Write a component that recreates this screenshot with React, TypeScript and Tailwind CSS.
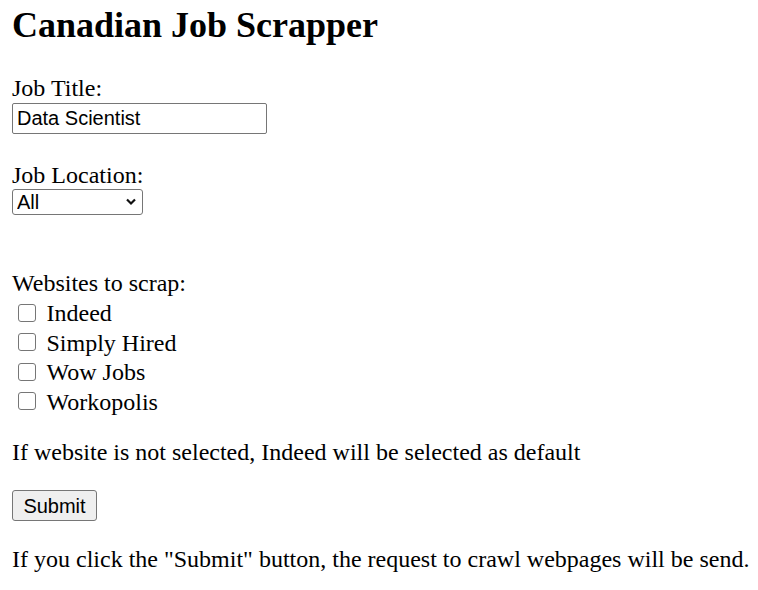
import { useState } from "react";

const sites = ["Indeed", "Simply Hired", "Wow Jobs", "Workopolis"];

export default function App() {
  const [title, setTitle] = useState("Data Scientist");
  const [location, setLocation] = useState("All");
  const [checked, setChecked] = useState<Record<string, boolean>>({});

  return (
    <div className="min-h-[590px] bg-white pl-3 text-black font-['Liberation_Serif','Times_New_Roman',serif]">
      <h1 className="m-0 mt-[2px] text-[36px] font-bold leading-[46px]">Canadian Job Scrapper</h1>

      {/* Job title */}
      <div className="mt-[27.4px] text-[24px] leading-[27px]">Job Title:</div>
      <input
        type="text"
        value={title}
        onChange={(e) => setTitle(e.target.value)}
        className="mt-[1px] block h-[31px] w-[255px] rounded-[2px] border border-[#767676] bg-white px-[4px] font-['Liberation_Sans',Arial,sans-serif] text-[20px] text-black outline-none"
      />

      {/* Location */}
      <div className="mt-[28px] text-[24px] leading-[27px]">Job Location:</div>
      <div className="relative mt-[0px] h-[26px] w-[131px]">
        <select
          value={location}
          onChange={(e) => setLocation(e.target.value)}
          className="block h-[26px] w-[131px] appearance-none rounded-[3px] border border-[#767676] bg-white pl-[4px] font-['Liberation_Sans',Arial,sans-serif] text-[20px] leading-[22px] text-black outline-none"
        >
          <option>All</option>
          <option>Toronto</option>
          <option>Vancouver</option>
          <option>Montreal</option>
        </select>
        <svg
          className="pointer-events-none absolute left-[113px] top-[9px] h-[8px] w-[12px]"
          viewBox="0 0 12 8"
          fill="none"
        >
          <path d="M2 1.5 L6 5.5 L10 1.5" stroke="#111" strokeWidth="2.2" />
        </svg>
      </div>

      {/* Websites */}
      <div className="mt-[54.5px] text-[24px] leading-[27px]">Websites to scrap:</div>
      <div className="mt-[2.5px] flex flex-col">
        {sites.map((s) => (
          <label key={s} className="flex h-[29.5px] cursor-pointer text-[24px] leading-[29.5px]">
            <span
              onClick={() => setChecked((c) => ({ ...c, [s]: !c[s] }))}
              className={`ml-[5.5px] mt-[4.5px] box-border h-[18px] w-[18px] rounded-[3px] border border-[#767676] ${
                checked[s] ? "bg-[#0075ff]" : "bg-white"
              }`}
            />
            <span className="ml-[11px]">{s}</span>
          </label>
        ))}
      </div>

      <p className="m-0 mt-[21.5px] text-[24px] leading-[27px]">
        If website is not selected, Indeed will be selected as default
      </p>

      <button className="mt-[24px] block h-[31px] w-[85px] rounded-[3px] border border-[#767676] bg-[#efefef] font-['Liberation_Sans',Arial,sans-serif] text-[20px] text-black">
        Submit
      </button>

      <p className="m-0 mt-[25.4px] text-[24px] leading-[27px]">
        If you click the "Submit" button, the request to crawl webpages will be send.
      </p>
    </div>
  );
}
